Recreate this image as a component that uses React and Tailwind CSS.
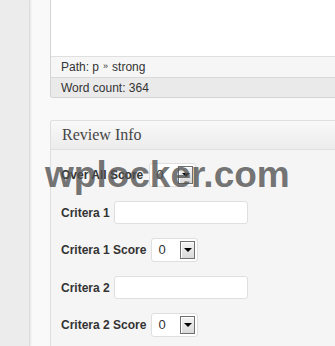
import React from "react";

const sans = { fontFamily: '"Liberation Sans", Arial, sans-serif' };

function ScoreSelect() {
    return (
        <div className="flex items-center w-[47px] h-[24px] bg-white border border-[#dfdfdf] rounded-[3px] shrink-0 font-normal">
            <span className="pl-[6px] text-[13px] text-[#333] flex-1 leading-none -mt-[2px]">0</span>
            <div className="mr-[2px] w-[15px] h-[18px] border border-[#707070] bg-gradient-to-b from-[#f4f4f4] to-[#d9d9d9] flex items-center justify-center shadow-[inset_1px_1px_0_#fff]">
                <div className="w-0 h-0 border-l-[4px] border-r-[4px] border-t-[4px] border-l-transparent border-r-transparent border-t-black" />
            </div>
        </div>
    );
}

function TextField() {
    return <div className="w-[134px] h-[23px] bg-white border border-[#dfdfdf] rounded-[3px] shrink-0" />;
}

export default function App() {
    return (
        <div className="relative w-[335px] h-[346px] overflow-hidden flex bg-[#f9f9f9]" style={sans}>
            {/* admin menu strip */}
            <div className="w-[30px] shrink-0 bg-[#ececec] border-r border-[#dcdcdc] shadow-[1px_0_2px_rgba(0,0,0,0.08)]" />

            <div className="flex-1 pl-[20px]">
                {/* editor box */}
                <div className="w-[320px] border-l border-b border-[#d4d4d4] rounded-bl-[3px] overflow-hidden">
                    <div className="h-[56px] bg-white" />
                    <div className="h-[21px] border-t border-[#dfdfdf] bg-[#f6f6f6] pl-[10px] flex items-center text-[12px] text-[#333]">
                        Path: p <span className="mx-[4px] text-[9px]">»</span> strong
                    </div>
                    <div className="h-[20px] border-t border-[#dadada] bg-[#eaeaea] pl-[10px] flex items-center text-[12px] text-[#333]">
                        Word count: 364
                    </div>
                </div>

                {/* review meta box */}
                <div className="mt-[22px] w-[320px] border-l border-t border-[#dfdfdf] rounded-tl-[3px] overflow-hidden">
                    <div
                        className="h-[29px] bg-gradient-to-b from-[#f9f9f9] to-[#ececec] border-b border-[#dfdfdf] pl-[11px] flex items-center text-[16px] text-[#464646]"
                        style={{ fontFamily: '"Liberation Serif", Georgia, serif' }}
                    >
                        Review Info
                    </div>
                    <div className="bg-[#f5f5f5] pl-[10px] pt-[13px] pb-[10px] flex flex-col gap-[13.5px] text-[12px] font-bold text-[#333]">
                        <div className="h-[24px] flex items-center gap-[6px]">
                            <span>Over All Score</span>
                            <ScoreSelect />
                        </div>
                        <div className="h-[24px] flex items-center gap-[4px]">
                            <span>Critera 1</span>
                            <TextField />
                        </div>
                        <div className="h-[24px] flex items-center gap-[5px]">
                            <span>Critera 1 Score</span>
                            <ScoreSelect />
                        </div>
                        <div className="h-[24px] flex items-center gap-[4px]">
                            <span>Critera 2</span>
                            <TextField />
                        </div>
                        <div className="h-[24px] flex items-center gap-[5px]">
                            <span>Critera 2 Score</span>
                            <ScoreSelect />
                        </div>
                    </div>
                </div>
            </div>

            {/* watermark */}
            <div className="absolute left-[45px] top-[156px] text-[37px] leading-[37px] font-bold text-[rgba(80,80,80,0.8)] pointer-events-none whitespace-nowrap">
                wplocker.com
            </div>
        </div>
    );
}
